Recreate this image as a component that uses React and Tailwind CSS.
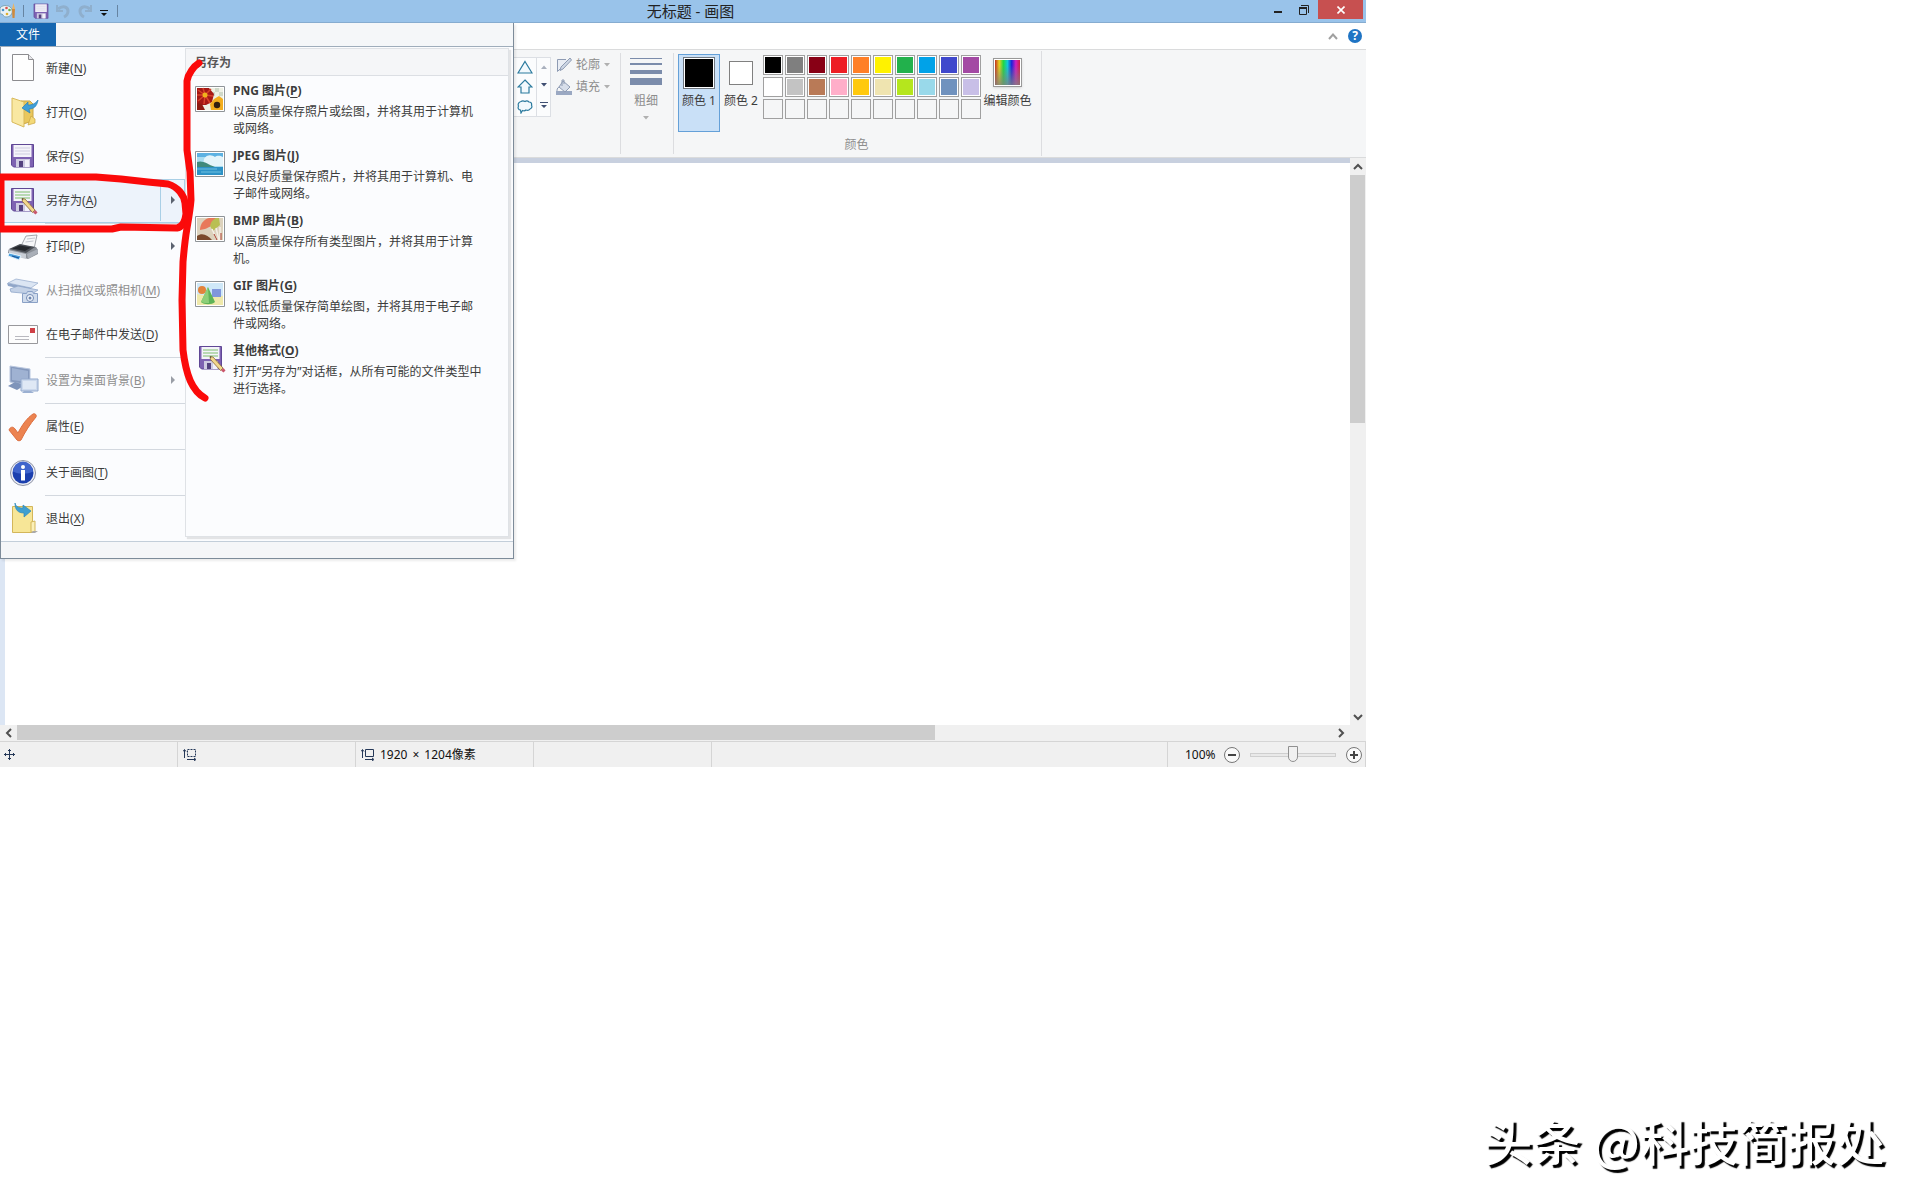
import React, { useState } from "react";

const PALETTE = [
  ["#000000", "#7f7f7f", "#880015", "#ed1c24", "#ff7f27", "#fff200", "#22b14c", "#00a2e8", "#3f48cc", "#a349a4"],
  ["#ffffff", "#c3c3c3", "#b97a57", "#ffaec9", "#ffc90e", "#efe4b0", "#b5e61d", "#99d9ea", "#7092be", "#c8bfe7"],
  [null, null, null, null, null, null, null, null, null, null]
];

const Floppy = ({ pencil }) => (
  <>
    <path d="M4.5 4.5h22v22.500h-20l-2-2z" fill="#7e62b2" stroke="#5f4795" />
    <path d="M6.500 5h18v12h-18z" fill="#f4f3fa" />
    <path d="M8 8h15M8 11h15M8 14h15" stroke={pencil ? "#7cbf6c" : "#cfcde0"} />
    <path d="M9 19h14v8H9z" fill="#cfcbe2" />
    <path d="M12 21h4v6h-4z" fill="#54427f" />
    <path d="M18 20h4v7h-4z" fill="#f3f1fa" />
    {pencil && (
      <>
        <path d="M15 14.500l3 .5 10 11-2.500 2.500L15.500 17.500z" fill="#f2d68c" stroke="#8a6a35" strokeWidth=".8" />
        <path d="M26 28.500l2.500-2.500 2 2.500-2 2z" fill="#c9566b" />
        <path d="M15 14.500l1.500.3-.8 1.500z" fill="#333" />
      </>
    )}
  </>
);

const ICONS = {
  new: (
    <>
      <path d="M5.500 2.500h16l5 5v21h-21z" fill="#fefefe" stroke="#8b8b8f" />
      <path d="M21.500 2.500v5h5" fill="#e6e6ea" stroke="#8b8b8f" />
    </>
  ),
  open: (
    <>
      <path d="M14 5h9l3 3v17l-10 3z" fill="#e9c75c" stroke="#c9a544" />
      <path d="M5 2l12 4v25L5 26z" fill="#f9e8a2" stroke="#d8b95b" />
      <path d="M24 20l4 3v4l-7 2z" fill="#f3d978" stroke="#c9a544" strokeWidth=".7" />
      <path d="M31 4c-1 7-5 9-9 9l1 4-8-5 6-6 0 3c4 0 7-1 10-5z" fill="#3f9fd8" stroke="#2a7fb8" strokeWidth=".7" />
    </>
  ),
  save: <Floppy />,
  saveAs: <Floppy pencil />,
  print: (
    <>
      <path d="M14 16l5-10 11-1-3 14z" fill="#f6f7f9" stroke="#8c9097" strokeWidth=".8" />
      <path d="M20 9l8-1M18.500 12l8-1" stroke="#c4c8d0" />
      <path d="M1 20l11-5 17 2 2 3v4l-10 5L1 23z" fill="#8a8f97" />
      <path d="M2 19l11-5 15 3-9 6z" fill="#4b4f56" />
      <path d="M5 18.500l8-3 11 2-6 3.500z" fill="#25282d" />
      <path d="M1 20l18 4v5L3 25z" fill="#c9ced6" />
      <path d="M20 24l11-5v4l-10 6z" fill="#a9afb8" />
      <path d="M2 23l12 3-2 4-11-4z" fill="#4aa0dd" stroke="#e8f4fc" />
      <path d="M5 26l7 2" stroke="#1c4f93" />
    </>
  ),
  scanner: (
    <>
      <path d="M1 9l8-4 22 4-7 5z" fill="#dbe5f3" stroke="#9db1d0" strokeWidth=".8" />
      <path d="M0 9l24 5v3L1 12z" fill="#8fa5c8" />
      <path d="M3 15l8-3 20 4-6 4L4 18z" fill="#c3d1e6" stroke="#90a7ca" strokeWidth=".8" />
      <path d="M15.500 19.500h4l1-2h5l1 2h4v9h-15z" fill="#cfdbec" stroke="#8aa1c6" />
      <circle cx="23" cy="24" r="3.500" fill="#f1f5fb" stroke="#7189b2" />
      <circle cx="23" cy="24" r="1.500" fill="#6d85ae" />
    </>
  ),
  mail: (
    <>
      <path d="M1.500 7.500h29v18h-29z" fill="#fdfdfd" stroke="#98989c" />
      <path d="M23 10h5v5h-5z" fill="#cf4046" />
      <path d="M8 18.500h14M8 21.500h14" stroke="#b9b9bf" />
    </>
  ),
  desktop: (
    <>
      <path d="M3 2l20 3v16L3 18z" fill="#8599bd" stroke="#b9c7df" />
      <path d="M5 4l16 3v11L5 16z" fill="#9fb2d2" />
      <path d="M1 22l7-4 10 3-8 5z" fill="#7e94ba" />
      <path d="M14 15h17v12H14z" fill="#cbd8ec" stroke="#93a9cc" />
      <path d="M16 17h13v8H16z" fill="#dfe8f5" />
      <path d="M15 29h12l-3-2h-7z" fill="#9bb0d2" />
    </>
  ),
  check: (
    <path d="M2 20c1-3 4-4 6-1l3 4C15 15 20 8 26 4c2-1 4 1 3 3-6 7-11 15-15 23-1 1-3 1-4 0z" fill="#ec8350" stroke="#dc6f41" />
  ),
  info: (
    <>
      <circle cx="16" cy="17" r="12.500" fill="#eceef4" stroke="#8d92a6" />
      <circle cx="16" cy="17" r="10.500" fill="#1b3fae" />
      <path d="M6 15.500a10 10 0 0 1 20 0c-6 3-14 3-20 0z" fill="#3f64cc" />
      <circle cx="16" cy="11" r="2" fill="#fff" />
      <path d="M14 14h4v10.500h-4z" fill="#fff" />
    </>
  ),
  exit: (
    <>
      <path d="M5.500 4.500h20v26h-20z" fill="#f7e697" stroke="#d3b65a" />
      <path d="M24 20l4-1v11h-4z" fill="#fbf0b8" stroke="#d3b65a" />
      <path d="M26 29h5l-3 2h-4z" fill="#aaa" />
      <path d="M8 1c1 4 4 5 8 5V3l8 6-7 6v-4c-6 0-9-3-9-10z" fill="#3f9fd0" stroke="#2c86b8" strokeWidth=".7" />
    </>
  )
};

const Icon = ({ name }) => (
  <svg viewBox="0 0 32 32" className="size-8 shrink-0" fill="none" aria-hidden="true">
    {ICONS[name]}
  </svg>
);

// framed 30x26 thumbnails of the save-as list
const THUMBS = {
  png: (
    <>
      <path d="M2 2h26v22H2z" fill="#eef0e4" />
      <path d="M20 2h4v4h-4zM24 6h4v4h-4zM16 6h4v4h-4z" fill="#cfd8c8" />
      <path d="M2 2h12l5 6-2 8-6 3H2z" fill="#a51815" />
      <path d="M10 9L3 4M10 9L8 2M10 9l6-6M10 9l8 1M10 9l5 8M10 9l-1 9M10 9l-7 6M10 9H2" stroke="#d8402a" strokeWidth="1.500" />
      <circle cx="10" cy="9" r="2.500" fill="#f0b21c" />
      <path d="M2 17l5 1 3 6H2z" fill="#8e1b12" />
      <path d="M19 13l5-3 4 3v11H16l-1-6z" fill="#f3ad1d" />
      <circle cx="22" cy="19" r="3.200" fill="#33200f" />
    </>
  ),
  jpeg: (
    <>
      <path d="M2 2h26v22H2z" fill="#a9dcf0" />
      <path d="M2 2h26v4H2z" fill="#5cb1e2" />
      <path d="M9 8c3-5 8-4 11-2 3-2 5-1 8 0v9H8z" fill="#e4f4fa" />
      <path d="M2 11c6-2 10 2 18 5H2z" fill="#3f8a7c" />
      <path d="M2 16h26v8H2z" fill="#2d92c6" />
      <path d="M2 18h20M6 21h20" stroke="#6fc0e0" />
    </>
  ),
  bmp: (
    <>
      <path d="M2 2h26v22H2z" fill="#dcd2bd" />
      <path d="M5 14C5 8 9 3 14 2h7c-1 6-6 9-11 11z" fill="#e8785a" />
      <path d="M15 10c1-5 4-7 6-8h3l1 7-7 6z" fill="#b9bf52" />
      <path d="M2 20c5-4 11-1 15 4H2z" fill="#7b4a2c" />
      <path d="M17 13l5 11M21 12l3 12M25 11l0 13" stroke="#f5efe6" strokeWidth="1.500" />
      <path d="M19 18l3 6M26 17v7" stroke="#a93b2a" />
    </>
  ),
  gif: (
    <>
      <path d="M2 2h26v22H2z" fill="#cfe8f8" />
      <path d="M2 13c8 2 18 0 26 2v9H2z" fill="#efe9ab" />
      <path d="M17 8h9v8h-9z" fill="#8097dc" />
      <circle cx="7" cy="9" r="4" fill="#e2833c" />
      <path d="M13 6l7 15c-3 3-11 3-14 0z" fill="#5fb457" />
      <path d="M13 6l1 16c-3 0-6 0-8-1z" fill="#8dcf78" />
    </>
  )
};

const MENU = [
  { icon: "new", label: "新建", k: "N" },
  { icon: "open", label: "打开", k: "O" },
  { icon: "save", label: "保存", k: "S" },
  { icon: "saveAs", label: "另存为", k: "A", arrow: true, active: true, line: true },
  { icon: "print", label: "打印", k: "P", arrow: true },
  { icon: "scanner", label: "从扫描仪或照相机", k: "M", disabled: true },
  { icon: "mail", label: "在电子邮件中发送", k: "D", line: true },
  { icon: "desktop", label: "设置为桌面背景", k: "B", arrow: true, disabled: true, line: true },
  { icon: "check", label: "属性", k: "E", line: true },
  { icon: "info", label: "关于画图", k: "T", line: true },
  { icon: "exit", label: "退出", k: "X" }
];

const FORMATS = [
  { thumb: "png", label: "PNG 图片", k: "P", text: "以高质量保存照片或绘图，并将其用于计算机或网络。" },
  { thumb: "jpeg", label: "JPEG 图片", k: "J", text: "以良好质量保存照片，并将其用于计算机、电子邮件或网络。" },
  { thumb: "bmp", label: "BMP 图片", k: "B", text: "以高质量保存所有类型图片，并将其用于计算机。" },
  { thumb: "gif", label: "GIF 图片", k: "G", text: "以较低质量保存简单绘图，并将其用于电子邮件或网络。" },
  { label: "其他格式", k: "O", text: "打开“另存为”对话框，从所有可能的文件类型中进行选择。" }
];

const Key = ({ k }) => (
  <>
    (<span className="underline underline-offset-2">{k}</span>)
  </>
);

const Down = ({ className }) => (
  <svg viewBox="0 0 6 4" className={`h-1 w-1.5 shrink-0 fill-current ${className || ""}`} aria-hidden="true">
    <path d="M0 0h6L3 3.500z" />
  </svg>
);

const Chevron = ({ d }) => (
  <svg viewBox="0 0 10 10" className="size-2.5" fill="none" stroke="#505050" strokeWidth="2" aria-hidden="true">
    <path d={d} />
  </svg>
);

const TitleBar = () => (
  <header className="flex h-[23px] items-center border-b border-[#86acd0] bg-[#99c3ea]">
    <div className="flex h-full w-[118px] items-center">
      <svg viewBox="0 0 16 16" className="size-4" aria-hidden="true">
        <path d="M0 5c3-4 11-3 12 2 1 4-2 7-6 7-3 0-2-2-4-3-1 0-2 0-2-1z" fill="#eaf2f6" stroke="#6f98a8" strokeWidth=".8" />
        <circle cx="3" cy="7" r="1.300" fill="#4a90c8" />
        <circle cx="6.500" cy="5" r="1.300" fill="#d9534a" />
        <circle cx="9.500" cy="7" r="1.300" fill="#6aae4a" />
        <circle cx="7" cy="11" r="1.300" fill="#e0b030" />
        <path d="M12 6h3l-.5 9h-2z" fill="#d08a3c" />
        <path d="M12 6l1.500-6L15 6z" fill="#e9b465" />
      </svg>
      <span className="ml-[7px] h-3 w-px bg-[#6684a2]" />
      <button aria-label="保存" className="ml-[9px]">
        <svg viewBox="3 3 25 25" className="size-4" fill="none"><Floppy /></svg>
      </button>
      <button aria-label="撤消" disabled className="ml-[6px]">
        <svg viewBox="0 0 16 16" className="size-4" fill="none" stroke="#8fafcd" strokeWidth="3">
          <path d="M3 6c5-4 10-2 10 2 0 3-2 5-4 6" />
          <path d="M2 2v6h6" strokeWidth="2" />
        </svg>
      </button>
      <button aria-label="重做" disabled className="ml-[6px]">
        <svg viewBox="0 0 16 16" className="size-4" fill="none" stroke="#8fafcd" strokeWidth="3">
          <path d="M13 6C8 2 3 4 3 8c0 3 2 5 4 6" />
          <path d="M14 2v6H8" strokeWidth="2" />
        </svg>
      </button>
      <button aria-label="自定义快速访问工具栏" className="ml-[7px] mt-1">
        <svg viewBox="0 0 8 8" className="size-2">
          <path d="M0 1h8v1H0zM1 4h6L4 7z" fill="#111" />
        </svg>
      </button>
      <span className="ml-[9px] h-3 w-px bg-[#6684a2]" />
    </div>
    <h1 className="flex-1 pr-1 text-center text-[15px] leading-5 text-[#222]">无标题 - 画图</h1>
    <div className="flex h-full items-start">
      <button aria-label="最小化" className="flex h-5 w-[22px] items-center justify-center pt-1">
        <span className="h-0.5 w-2 bg-[#222]" />
      </button>
      <button aria-label="还原" className="flex h-[19px] w-[29px] items-center justify-center">
        <svg viewBox="0 0 10 10" className="size-2.5" fill="none" stroke="#222">
          <path d="M.5 3h7v6.500h-7z" />
          <path d="M0 3h8" strokeWidth="2" />
          <path d="M2 .5h7.500V8" />
        </svg>
      </button>
      <button aria-label="关闭" className="mr-[3px] flex h-[19px] w-[45px] items-center justify-center bg-[#c75050]">
        <svg viewBox="0 0 8 8" className="size-2" stroke="#fff" strokeWidth="1.600">
          <path d="M.5.500l7 7M7.500.500l-7 7" />
        </svg>
      </button>
    </div>
  </header>
);

const Ribbon = ({ color, setColor }) => (
  <section className="flex h-[108px] border-b border-[#dadbdc] bg-[#f5f6f7] pl-[514px] text-[12px] leading-4 text-[#3c3c3c]">
    <div className="mt-[7px] flex h-[60px] w-[37px] border border-l-0 border-[#dcdfe4] bg-[#fbfcfd]">
      <div className="flex w-[23px] flex-col items-center justify-around border-r border-[#dcdfe4]">
        <svg viewBox="0 0 16 14" className="h-3.5 w-4" fill="#f2f9fd" stroke="#2b7a9e" strokeWidth="1.200"><path d="M8 1.500l7 11.500H1z" /></svg>
        <svg viewBox="0 0 16 16" className="size-4" fill="#f2f9fd" stroke="#2b7a9e" strokeWidth="1.200"><path d="M8 1l7 7h-3v6H4V8H1z" /></svg>
        <svg viewBox="0 0 16 14" className="h-3.5 w-4" fill="#f2f9fd" stroke="#2b7a9e" strokeWidth="1.200"><path d="M4 1.500c1.500-1 3-.5 4 0 1.500-1 3-.5 4 .5 2 0 3 1.500 2.500 3 1 2 0 3.500-1.500 4-1 1.500-2.500 1.500-4 1-1 1-2.500 1-3.500.5L4 13l-.5-3C1.500 10 .5 8 1.500 6 .5 4 2 2 4 1.500z" /></svg>
      </div>
      <div className="flex flex-1 flex-col items-center justify-around text-[#3f4f72]">
        <Down className="rotate-180 text-[#a9b0bd]" />
        <Down />
        <svg viewBox="0 0 8 8" className="size-2 fill-current"><path d="M0 1h8v1H0zM1 4h6L4 7z" /></svg>
      </div>
    </div>
    <div className="flex w-[69px] flex-col pl-[5px] pt-1 text-[#8d8d8d]">
      <button disabled className="flex h-[22px] items-center gap-1">
        <svg viewBox="0 0 16 16" className="size-4" fill="none" stroke="#8e9bb3">
          <path d="M10 2.500H1.500v12L12 4" fill="#e9edf4" />
          <path d="M14 1l1.500 2L7 12l-3 1.500L5 10z" fill="#cdd6e4" />
        </svg>
        轮廓
        <Down className="text-[#b0b0b0]" />
      </button>
      <button disabled className="flex h-[22px] items-center gap-1">
        <svg viewBox="0 0 16 16" className="size-4" fill="none" stroke="#8e9bb3">
          <path d="M0 12h16v4H0z" fill="#9aa8c2" stroke="none" />
          <path d="M7 2l7 6-5 5-6-5z" fill="#d7deea" />
          <path d="M6 7V1h2v4M3 8c-2 1-2 3-2 4" />
        </svg>
        填充
        <Down className="text-[#b0b0b0]" />
      </button>
    </div>
    <div className="my-[3px] border-l border-[#dcdde0]" />
    <button disabled className="flex w-[52px] flex-col items-center pr-0.5 pt-[7px] text-[#8d8d8d]">
      <svg viewBox="0 0 32 28" className="h-7 w-8" fill="#7b8cab" aria-hidden="true">
        <path d="M0 1h32v1H0zM0 6h32v2H0zM0 13h32v4H0zM0 21h32v7H0z" />
      </svg>
      <span className="mt-2">粗细</span>
      <Down className="mt-[7px] text-[#b0b0b0]" />
    </button>
    <div className="my-[3px] border-l border-[#dcdde0]" />
    <div className="my-px flex w-[368px] flex-col justify-between border-r border-[#dcdde0] pb-[3px] pl-1 pt-[3px]">
      <div className="flex items-start">
        <button className="flex h-[78px] w-[42px] flex-col items-center border border-[#64a0d8] bg-[#c9e0f7] pt-[2px]">
          <span className="size-8 border border-[#6f7780] bg-white p-px">
            <span className="block size-full" style={{ backgroundColor: color }} />
          </span>
          <span className="mt-1 whitespace-nowrap">颜色 1</span>
        </button>
        <button className="flex h-[78px] w-[42px] flex-col items-center pt-[7px]">
          <span className="size-6 border border-[#808080] bg-white" />
          <span className="mt-2 whitespace-nowrap">颜色 2</span>
        </button>
        <div className="ml-px mt-px grid grid-cols-[repeat(10,20px)] gap-0.5">
          {PALETTE.flat().map((c, i) => (
            <button
              key={i}
              disabled={!c}
              aria-label={c || "空"}
              onClick={() => setColor(c)}
              className="size-5 border border-[#a0a0a0] p-px"
              style={{ backgroundColor: c ? "#fff" : "transparent" }}
            >
              {c && <span className="block size-full" style={{ backgroundColor: c }} />}
            </button>
          ))}
        </div>
        <button className="flex w-[53px] flex-col items-center pt-1">
          <span className="size-[29px] border border-[#999] bg-white p-px shadow-sm">
            <span className="block size-full bg-[linear-gradient(to_bottom,transparent_20%,#808080cc),linear-gradient(to_right,#c03020,#e8d020,#20d840,#10c8d8,#2020d8,#d020c0,#d02040)]" />
          </span>
          <span className="mt-1.5 whitespace-nowrap">编辑颜色</span>
        </button>
      </div>
      <div className="pr-1.5 text-center text-[#8d8d8d]">颜色</div>
    </div>
  </section>
);

const FileMenu = () => (
  <div className="absolute left-0 top-[23px] z-10 w-[514px] border-b border-l border-r border-[#7d8b99] bg-[#fbfcfe] text-[12px] leading-[17px] text-[#3c3c3c] shadow-[2px_2px_2px_#00000014]">
    <div className="-ml-px h-6 border-b border-[#9fadbb] bg-[#f5f7f9]">
      <button className="h-[23px] w-14 bg-[#1566b0] text-white">文件</button>
    </div>
    <div className="flex">
      <nav className="flex w-[184px] flex-col">
        {MENU.map((m) => (
          <React.Fragment key={m.k}>
            <button
              disabled={m.disabled}
              className={`flex h-11 items-center pb-0.5 pl-1.5 text-left disabled:text-[#8f8f8f] ${
                m.active ? "bg-[#edf3fb] outline outline-1 -outline-offset-1 outline-[#a9cfe6]" : ""
              }`}
            >
              <Icon name={m.icon} />
              <span className="ml-[7px] flex-1 whitespace-nowrap">
                {m.label}
                <Key k={m.k} />
              </span>
              {m.arrow && (
                <span className={`flex h-full w-[25px] items-center justify-center ${m.active ? "border-l border-[#a9cfe6]" : ""}`}>
                  <svg viewBox="0 0 4 8" className="h-2 w-1" fill={m.disabled ? "#9a9ea6" : "#5c6370"}><path d="M0 0l4 4-4 4z" /></svg>
                </span>
              )}
            </button>
            {m.line && <div className="ml-11 h-0.5 border-t border-[#d3d8df]" />}
          </React.Fragment>
        ))}
      </nav>
      <div className="mb-1 mr-1 mt-px flex-1 border border-[#dfe2e6] bg-[#fbfcfe] shadow-[2px_2px_1px_#00000018]">
        <h2 className="flex h-[27px] items-center border-b border-[#dcdfe4] bg-[#f5f6f8] pl-[9px] font-bold text-[#555]">另存为</h2>
        <ul className="pt-1.5">
          {FORMATS.map((f) => (
            <li key={f.k}>
              <button className="flex h-[65px] w-full items-start pl-[9px] text-left">
                {f.thumb ? (
                  <svg viewBox="0 0 30 26" className="mt-1 h-[26px] w-[30px]" fill="none" aria-hidden="true">
                    <path d="M.5.500h29v25H.5z" fill="#fff" stroke="#8f9498" />
                    {THUMBS[f.thumb]}
                  </svg>
                ) : (
                  <span className="w-[30px]"><Icon name="saveAs" /></span>
                )}
                <span className="ml-2 w-[251px]">
                  <b className="mb-1 block">
                    {f.label}
                    <Key k={f.k} />
                  </b>
                  {f.text}
                </span>
              </button>
            </li>
          ))}
        </ul>
      </div>
    </div>
    <div className="h-[17px] border-t border-[#c3ced9] bg-[#f5f6f8]" />
  </div>
);

const Marks = () => (
  <svg viewBox="0 0 220 410" className="pointer-events-none absolute left-0 top-0 z-20 h-[410px] w-[220px]" fill="none" stroke="#fb0a0a" strokeWidth="7" strokeLinecap="round" strokeLinejoin="round" aria-hidden="true">
    <path d="M1 177H96L121 179L148 182L168 184C178 187 184 195 185 203L186 214C185 222 183 227 177 228L121 227L112 229H1z" />
    <path d="M199 63C194 66 188 74 187 81V150L190 172L191 200C190 212 188 222 187 228C185 240 184 250 183 262L182 300L183 350C186 375 192 391 205 398" />
  </svg>
);

const StatusBar = ({ zoom, setZoom }) => (
  <footer className="flex h-[26px] items-center border-t border-[#d5d5d5] bg-[#f0f0f0] text-[12px] leading-4 text-[#111]">
    <div className="flex h-full w-[178px] items-center border-r border-[#d5d5d5] pl-1">
      <svg viewBox="0 0 11 11" className="size-[11px]" fill="none" stroke="#253858">
        <path d="M5.500 0v11M0 5.500h11M4 2l1.500-1.500L7 2M4 9l1.500 1.500L7 9M2 4L.5 5.500 2 7M9 4l1.500 1.500L9 7" />
      </svg>
    </div>
    <div className="flex h-full w-[178px] items-center border-r border-[#d5d5d5] pl-[5px]">
      <svg viewBox="0 0 14 12" className="h-3 w-3.5" fill="none" stroke="#253858">
        <path d="M4.500.500h8v7h-8z" strokeDasharray="2 1" />
        <path d="M1.500 9V1M0 2.500l1.500-2 1.500 2M4 10.500h8M11 9l2 1.500-2 1.500" />
      </svg>
    </div>
    <div className="flex h-full w-[178px] items-center gap-[5px] border-r border-[#d5d5d5] pl-[5px]">
      <svg viewBox="0 0 14 12" className="h-3 w-3.5" fill="none" stroke="#253858">
        <path d="M4.500.500h8v7h-8z" />
        <path d="M1.500 9V1M0 2.500l1.500-2 1.500 2M4 10.500h8M11 9l2 1.500-2 1.500" />
      </svg>
      <span className="flex gap-[5px]">
        <span>1920</span>
        <span>×</span>
        <span>1204像素</span>
      </span>
    </div>
    <div className="h-full w-[178px] border-r border-[#d5d5d5]" />
    <div className="h-full flex-1" />
    <div className="flex h-full items-center border-l border-r border-[#d5d5d5] pl-[17px] pr-[3px]">
      <label htmlFor="zoom" className="w-[39px]">{zoom}%</label>
      <button aria-label="缩小" className="flex size-4 items-center justify-center rounded-full border border-[#777] bg-[#fafafa]">
        <svg viewBox="0 0 8 8" className="size-2" stroke="#444" strokeWidth="2"><path d="M0 4h8" /></svg>
      </button>
      <input
        id="zoom"
        type="range"
        min="0"
        max="200"
        value={zoom}
        onChange={(e) => setZoom(Number(e.target.value))}
        className="mx-[10px] h-4 w-[86px] appearance-none bg-transparent [&::-webkit-slider-runnable-track]:h-1 [&::-webkit-slider-runnable-track]:border [&::-webkit-slider-runnable-track]:border-[#cfcfcf] [&::-webkit-slider-runnable-track]:bg-[#e9e9e9] [&::-webkit-slider-thumb]:-mt-[8px] [&::-webkit-slider-thumb]:h-4 [&::-webkit-slider-thumb]:w-2.5 [&::-webkit-slider-thumb]:appearance-none [&::-webkit-slider-thumb]:border [&::-webkit-slider-thumb]:border-[#909090] [&::-webkit-slider-thumb]:bg-[#f0f0f0] [&::-webkit-slider-thumb]:rounded-b-[5px]"
      />
      <button aria-label="放大" className="flex size-4 items-center justify-center rounded-full border border-[#777] bg-[#fafafa]">
        <svg viewBox="0 0 8 8" className="size-2" stroke="#444" strokeWidth="2"><path d="M0 4h8M4 0v8" /></svg>
      </button>
    </div>
  </footer>
);

const App = () => {
  const [color, setColor] = useState("#000000");
  const [zoom, setZoom] = useState(100);

  return (
    <div lang="zh-CN" className="flex min-h-screen flex-col bg-white font-['Noto_Sans','Noto_Sans_CJK_SC',sans-serif]">
      <main className="relative mr-[554px] flex flex-1 flex-col">
        <TitleBar />
        <div className="flex h-[27px] items-center justify-end gap-2.5 border-b border-[#dadbdc] bg-white pr-1">
          <button aria-label="最小化功能区">
            <svg viewBox="0 0 10 8" className="h-2 w-2.5" fill="none" stroke="#a0a0a0" strokeWidth="2"><path d="M1 7l4-4.500L9 7" /></svg>
          </button>
          <button aria-label="帮助" className="size-3.5 rounded-full bg-[#1f74c4] text-[12px] font-bold leading-3.5 text-white">?</button>
        </div>
        <Ribbon color={color} setColor={setColor} />
        <div className="flex flex-1">
          <div className="flex flex-1 flex-col">
            <div className="h-[5px] bg-[#c8d0df]" />
            <div className="flex-1 border-l-[5px] border-[#dce6f4] bg-white" />
          </div>
          <div className="flex w-4 flex-col items-center bg-[#f0f0f0] pr-px">
            <button aria-label="向上" className="flex h-[17px] items-center"><Chevron d="M1 7l4-4 4 4" /></button>
            <div className="w-[15px] flex-[93] bg-[#cdcdcd]" />
            <div className="flex-[107]" />
            <button aria-label="向下" className="flex h-[17px] items-center"><Chevron d="M1 3l4 4 4-4" /></button>
          </div>
        </div>
        <div className="flex h-4 items-start bg-[#f0f0f0] pr-[17px]">
          <button aria-label="向左" className="flex h-[15px] w-[17px] items-center justify-center"><Chevron d="M7 1L3 5l4 4" /></button>
          <div className="h-[15px] flex-[698] bg-[#cdcdcd]" />
          <div className="flex-[302]" />
          <button aria-label="向右" className="flex h-[15px] w-[17px] items-center justify-center"><Chevron d="M3 1l4 4-4 4" /></button>
        </div>
        <StatusBar zoom={zoom} setZoom={setZoom} />
        <FileMenu />
        <Marks />
      </main>
      <div className="flex h-[437px] items-end justify-end pb-8 pr-[35px]">
        <p className="font-['Noto_Sans_CJK_SC',sans-serif] text-[49px] font-medium leading-[64px] text-white [text-shadow:3px_3px_1px_#000]">头条 @科技简报处</p>
      </div>
    </div>
  );
};

export default App;
